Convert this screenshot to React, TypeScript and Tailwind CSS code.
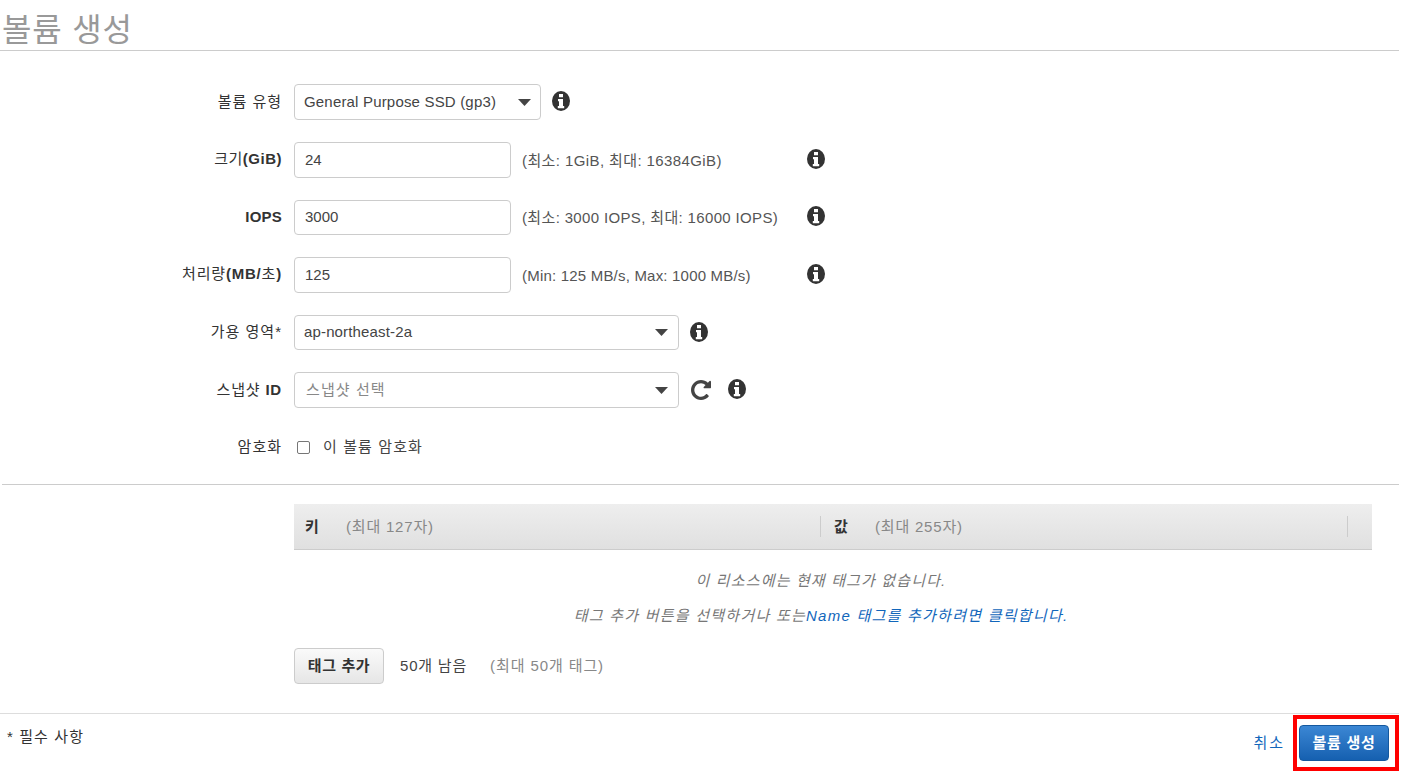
import React from 'react';

const FONT = "font-['Liberation_Sans','Noto_Sans_CJK_KR',sans-serif]";

const Info = () => (
  <svg width="18" height="20" viewBox="0 0 18 20" className="shrink-0 -mt-[2px]">
    <ellipse cx="9" cy="10" rx="9" ry="10" fill="#333" />
    <path d="M7 3h4v3.2H7zM6 8h5v7h1.2v2.2H5.8V15H7v-4.8H6z" fill="#fff" />
  </svg>
);

const Refresh = () => (
  <svg width="20" height="20" viewBox="0 0 1536 1536" className="shrink-0">
    <path
      transform="translate(0 1408) scale(1 -1)"
      fill="#444"
      d="M1536 1280v-448q0-26-19-45t-45-19h-448q-42 0-59 40-17 39 14 69l138 138q-148 137-349 137-104 0-198.5-40.5t-163.5-109.5-109.5-163.5-40.5-198.5 40.5-198.5 109.5-163.5 163.5-109.5 198.5-40.5q119 0 225 52t179 147q7 10 23 12 14 0 25-9l137-138q9-8 9.5-20.5t-7.5-22.5q-109-132-264-204.5t-327-72.5q-156 0-298 61t-245 164-164 245-61 298 61 298 164 245 245 164 298 61q147 0 284.5-55.5t244.5-156.5l130 129q29 31 70 14 39-17 39-59z"
    />
  </svg>
);

const Caret = () => (
  <svg width="13" height="7" viewBox="0 0 13 7" className="shrink-0">
    <path d="M0 0h13L6.5 7z" fill="#444" />
  </svg>
);

const Row = ({ label, tracking, children }: { label: React.ReactNode; tracking: string; children: React.ReactNode }) => (
  <div className="flex items-center h-[35.6px] mb-[22px]">
    <label className={`w-[282px] -mt-[2px] text-right text-[15px] text-[#333] leading-none ${tracking}`}>{label}</label>
    <div className="flex items-center ml-[12px]">{children}</div>
  </div>
);

const Select = ({ width, value, tracking, placeholder, pad = 'pr-[10px]' }: { width: string; value: string; tracking: string; placeholder?: boolean; pad?: string }) => (
  <div className={`${width} ${pad} h-[35.6px] flex items-center justify-between border border-[#ccc] rounded-[4px] bg-white pl-[9px]`}>
    <span className={`text-[15px] ${tracking} ${placeholder ? 'text-[#888] pl-[2px]' : 'text-[#444]'}`}>{value}</span>
    <Caret />
  </div>
);

const Field = ({ value, hint, tracking }: { value: string; hint: string; tracking: string }) => (
  <>
    <div className="w-[217px] h-[35.6px] flex items-center border border-[#ccc] rounded-[4px] bg-white pl-[10px] text-[15px] text-[#444]">{value}</div>
    <span className={`w-[285px] ml-[11px] text-[15px] text-[#555] mt-[2px] ${tracking}`}>{hint}</span>
    <Info />
  </>
);

export default function App() {
  return (
    <div className={`${FONT} h-[772px] overflow-hidden bg-white pr-[29px]`}>
      <h1 className="h-[51px] pl-[2px] border-b border-[#ccc] text-[32px] tracking-[0.8px] leading-[60px] text-[#999] font-normal">볼륨 생성</h1>

      <div className="pt-[33.4px]">
        <Row label="볼륨 유형" tracking="tracking-[1px]">
          <Select width="w-[247px]" pad="pr-[9px]" value="General Purpose SSD (gp3)" tracking="tracking-[0.18px]" />
          <span className="ml-[11px] flex items-center"><Info /></span>
        </Row>
        <Row label={<>크기<b>(GiB)</b></>} tracking="tracking-[0.5px]">
          <Field value="24" hint="(최소: 1GiB, 최대: 16384GiB)" tracking="tracking-[0.4px]" />
        </Row>
        <Row label={<b>IOPS</b>} tracking="tracking-[0.2px]">
          <Field value="3000" hint="(최소: 3000 IOPS, 최대: 16000 IOPS)" tracking="tracking-[0.35px]" />
        </Row>
        <Row label={<>처리량<b>(MB/</b>초<b>)</b></>} tracking="tracking-[0.8px]">
          <Field value="125" hint="(Min: 125 MB/s, Max: 1000 MB/s)" tracking="tracking-[0.2px]" />
        </Row>
        <Row label="가용 영역*" tracking="tracking-[1px]">
          <Select width="w-[385px]" value="ap-northeast-2a" tracking="tracking-[0.15px]" />
          <span className="ml-[11px] flex items-center"><Info /></span>
        </Row>
        <Row label={<>스냅샷 <b>ID</b></>} tracking="tracking-[0.8px]">
          <Select width="w-[385px]" value="스냅샷 선택" tracking="tracking-[1.1px]" placeholder />
          <span className="ml-[12px]"><Refresh /></span>
          <span className="ml-[17px] flex items-center"><Info /></span>
        </Row>
        <div className="flex items-center h-[35px]">
          <label className="w-[282px] text-right text-[15px] text-[#333] tracking-[1px]">암호화</label>
          <span className="ml-[15px] w-[13px] h-[13px] border border-[#767676] rounded-[2px] bg-white" />
          <span className="ml-[13px] text-[15px] text-[#444] tracking-[1.1px]">이 볼륨 암호화</span>
        </div>
      </div>

      <div className="mt-[19px] ml-[2px] border-t border-[#ccc]" />

      <div className="ml-[294px] mr-[27px] mt-[19px]">
        <div className="h-[46px] flex items-center bg-gradient-to-b from-[#eeeeee] to-[#e0e0e0] border-b border-[#ccc] text-[15px]">
          <div className="w-[526px] flex items-center h-full pl-[11px] pt-[1px]">
            <span className="w-[41px] font-bold text-[#333]">키</span>
            <span className="text-[#888] tracking-[0.8px]">(최대 127자)</span>
          </div>
          <div className="w-[528px] h-[21px] flex items-center border-x border-[#ccc] pl-[13px] pt-[1px]">
            <span className="w-[41px] font-bold text-[#333]">값</span>
            <span className="text-[#888] tracking-[0.8px]">(최대 255자)</span>
          </div>
        </div>

        <div className="pt-[20px] pr-[24px] text-center text-[15px] italic text-[#777]">
          <p className="h-[35px] leading-[22px] tracking-[1.15px]">이 리소스에는 현재 태그가 없습니다.</p>
          <p className="leading-[22px] tracking-[1.25px]">
            태그 추가 버튼을 선택하거나 또는<a className="text-[#1166bb]">Name 태그를 추가하려면 클릭합니다.</a>
          </p>
        </div>

        <div className="mt-[21px] flex items-center h-[36px] text-[15px]">
          <button className="w-[90px] h-[36px] rounded-[4px] border border-[#ccc] bg-gradient-to-b from-[#fafafa] to-[#e6e6e6] font-bold text-[#333] tracking-[0.6px]">태그 추가</button>
          <span className="ml-[16px] text-[#444] tracking-[0.8px]">50개 남음</span>
          <span className="ml-[23px] text-[#888] tracking-[0.9px]">(최대 50개 태그)</span>
        </div>
      </div>

      <div className="mt-[29px] border-t border-[#ddd] flex justify-between">
        <span className="pl-[7px] pt-[12px] text-[15px] text-[#333] tracking-[1.1px]">* 필수 사항</span>
        <div className="flex items-center pt-[1px]">
          <a className="text-[15px] text-[#1166bb] mr-[8px] mt-[1px] tracking-[2px]">취소</a>
          <div className="border-4 border-[#ff0000] pl-[2px] pr-[6px] py-[6px]">
            <button className="w-[90px] h-[36px] block rounded-[4px] border border-[#15589e] bg-gradient-to-b from-[#3b87d4] to-[#1560b0] text-[15px] font-bold text-white tracking-[0.7px]">볼륨 생성</button>
          </div>
        </div>
      </div>
    </div>
  );
}
